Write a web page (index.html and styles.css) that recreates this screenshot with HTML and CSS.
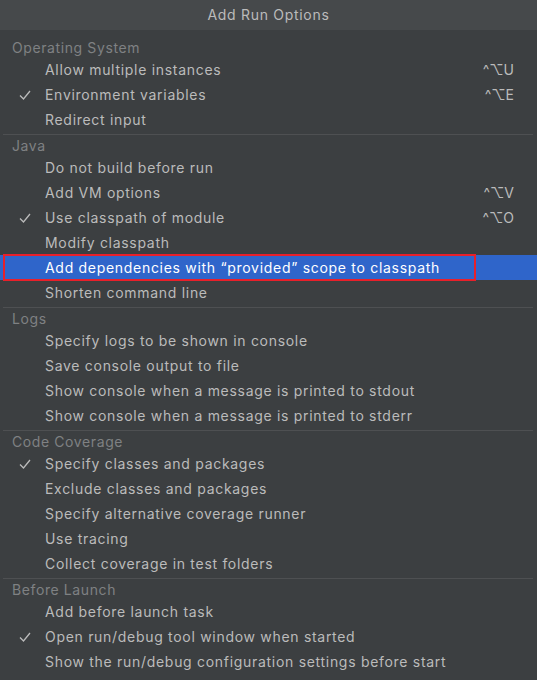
FILE: index.html
```html
<!DOCTYPE html>
<html>
<head>
<meta charset="utf-8">
<link rel="stylesheet" href="styles.css">
</head>
<body>
<div class="popup">
  <div class="title">Add Run Options</div>
  <div class="list">
    <div class="section first">
      <div class="sec-head">Operating System</div>
      <div class="item"><span class="check"></span><span class="label">Allow multiple instances</span><span class="key">^⌥U</span></div>
      <div class="item"><span class="check"><svg viewBox="0 0 12 12" width="12" height="12"><polyline points="1,6.5 4.5,10 11,2" fill="none" stroke="#bbbbbb" stroke-width="1.3"/></svg></span><span class="label">Environment variables</span><span class="key">^⌥E</span></div>
      <div class="item"><span class="check"></span><span class="label">Redirect input</span></div>
    </div>
    <div class="section">
      <div class="sec-head">Java</div>
      <div class="item"><span class="check"></span><span class="label">Do not build before run</span></div>
      <div class="item"><span class="check"></span><span class="label">Add VM options</span><span class="key">^⌥V</span></div>
      <div class="item"><span class="check"><svg viewBox="0 0 12 12" width="12" height="12"><polyline points="1,6.5 4.5,10 11,2" fill="none" stroke="#bbbbbb" stroke-width="1.3"/></svg></span><span class="label">Use classpath of module</span><span class="key">^⌥O</span></div>
      <div class="item"><span class="check"></span><span class="label">Modify classpath</span></div>
      <div class="item selected"><span class="check"></span><span class="label">Add dependencies with “provided” scope to classpath</span><span class="mark"></span></div>
      <div class="item"><span class="check"></span><span class="label">Shorten command line</span></div>
    </div>
    <div class="section">
      <div class="sec-head">Logs</div>
      <div class="item"><span class="check"></span><span class="label">Specify logs to be shown in console</span></div>
      <div class="item"><span class="check"></span><span class="label">Save console output to file</span></div>
      <div class="item"><span class="check"></span><span class="label">Show console when a message is printed to stdout</span></div>
      <div class="item"><span class="check"></span><span class="label">Show console when a message is printed to stderr</span></div>
    </div>
    <div class="section">
      <div class="sec-head">Code Coverage</div>
      <div class="item"><span class="check"><svg viewBox="0 0 12 12" width="12" height="12"><polyline points="1,6.5 4.5,10 11,2" fill="none" stroke="#bbbbbb" stroke-width="1.3"/></svg></span><span class="label">Specify classes and packages</span></div>
      <div class="item"><span class="check"></span><span class="label">Exclude classes and packages</span></div>
      <div class="item"><span class="check"></span><span class="label">Specify alternative coverage runner</span></div>
      <div class="item"><span class="check"></span><span class="label">Use tracing</span></div>
      <div class="item"><span class="check"></span><span class="label">Collect coverage in test folders</span></div>
    </div>
    <div class="section">
      <div class="sec-head">Before Launch</div>
      <div class="item"><span class="check"></span><span class="label">Add before launch task</span></div>
      <div class="item"><span class="check"><svg viewBox="0 0 12 12" width="12" height="12"><polyline points="1,6.5 4.5,10 11,2" fill="none" stroke="#bbbbbb" stroke-width="1.3"/></svg></span><span class="label">Open run/debug tool window when started</span></div>
      <div class="item"><span class="check"></span><span class="label">Show the run/debug configuration settings before start</span></div>
    </div>
  </div>
</div>
</body>
</html>
```

FILE: styles.css
```css
html, body {
  margin: 0;
  padding: 0;
  background: #3c3f41;
}
.popup {
  width: 537px;
  height: 680px;
  overflow: hidden;
  background: #3c3f41;
  font-family: "Inter", "Noto Sans", sans-serif;
  font-size: 14px;
  letter-spacing: 0.7px;
  color: #bbbbbb;
}
.title {
  height: 30px;
  line-height: 30px;
  background: #46494b;
  text-align: center;
  color: #bbbbbb;
}
.list {
  padding-top: 7px;
}
.section {
  padding-bottom: 2px;
}
.section + .section {
  border-top: 1px solid #4e5052;
  margin: 0 4px 0 3px;
}
.section + .section .item {
  margin: 0 -4px 0 -3px;
}
.section + .section .sec-head {
  margin-left: -3px;
}
.sec-head {
  height: 20px;
  padding-top: 2px;
  box-sizing: border-box;
  line-height: 18px;
  padding-left: 12px;
  color: #7f8183;
  letter-spacing: 0.6px;
}
.item {
  position: relative;
  display: flex;
  align-items: center;
  height: 25px;
}
.check {
  width: 45px;
  flex: none;
  display: flex;
  align-items: center;
  padding-left: 19px;
  box-sizing: border-box;
}
.check svg {
  display: block;
}
.label {
  flex: 1;
  white-space: nowrap;
}
.key {
  padding-right: 23px;
  letter-spacing: 0;
  color: #bbbbbb;
}
.selected {
  background: #2f65ca;
  color: #ffffff;
}
.mark {
  position: absolute;
  left: 3px;
  top: -1px;
  width: 473px;
  height: 27px;
  border: 2px solid #e8202a;
  box-sizing: border-box;
}
```
